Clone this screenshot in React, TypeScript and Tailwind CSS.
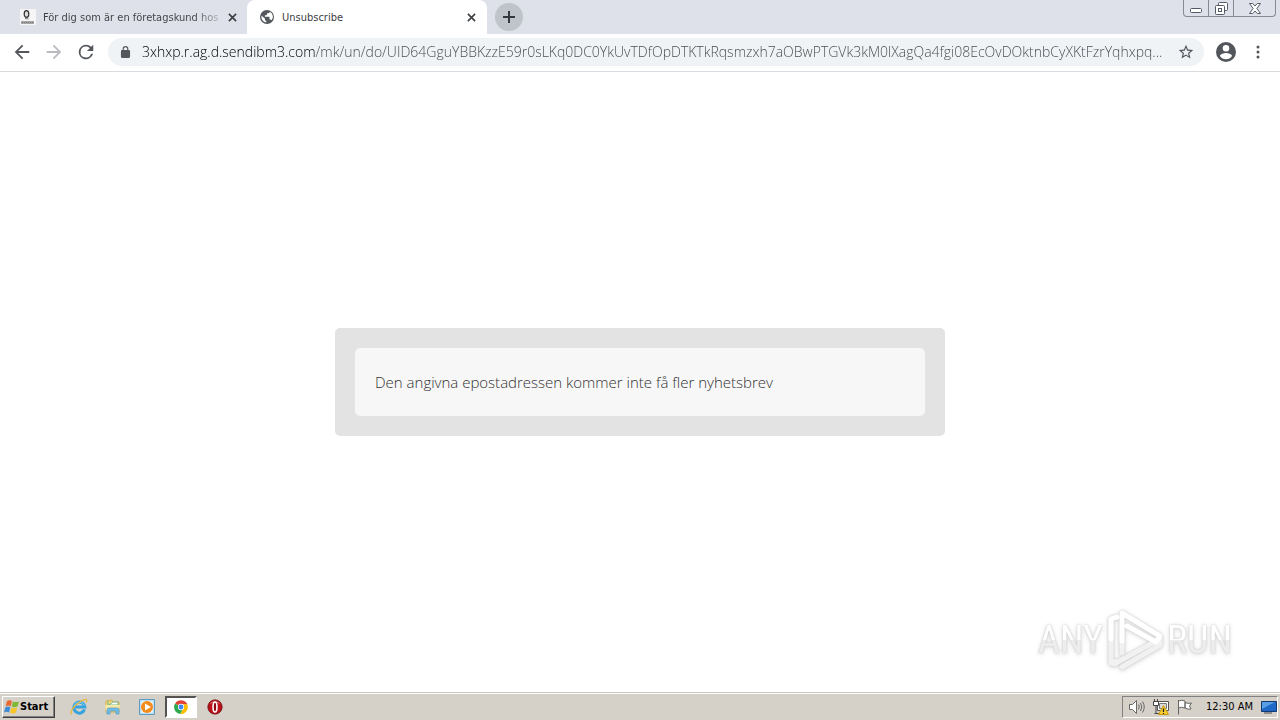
import React from "react";

const url =
  "3xhxp.r.ag.d.sendibm3.com/mk/un/do/UID64GguYBBKzzE59r0sLKq0DC0YkUvTDfOpDTKTkRqsmzxh7aOBwPTGVk3kM0lXagQa4fgi08EcOvDOktnbCyXKtFzrYqhxpq...";

function CloseIcon() {
  return (
    <svg viewBox="0 0 10 10" className="size-[9px]" stroke="#3c4043" strokeWidth="1.8">
      <path d="M1 1l8 8M9 1l-8 8" />
    </svg>
  );
}

function TabStrip() {
  return (
    <header className="flex h-[34px] items-start bg-[#dee1e9]">
      <div className="flex h-[34px] w-[247px] items-center pl-5 pr-[7px]">
        <svg viewBox="0 0 16 16" className="size-4 shrink-0">
          <path d="M0 0h16v16H0z" fill="#f5f5f5" />
          <ellipse cx="6.5" cy="5" rx="2.3" ry="3.4" fill="#ddd" stroke="#333" strokeWidth="1.2" />
          <path d="M5 9.500l3.500.500" stroke="#777" strokeWidth="1" />
          <path d="M1 12h13v3H1z" fill="#a5a5a5" />
          <path d="M2 13.500h11" stroke="#777" strokeDasharray="1 1" />
        </svg>
        <a
          href="#first"
          className="ml-[7px] whitespace-nowrap bg-[linear-gradient(to_right,#3c4043_150px,#b0b3b9_175px)] bg-clip-text pt-[2px] text-[11px] text-transparent"
        >
          För dig som är en företagskund hos
        </a>
        <button aria-label="Close first tab" className="ml-auto flex size-4 items-center justify-center">
          <CloseIcon />
        </button>
      </div>
      <div className="flex h-[34px] w-60 items-center rounded-t-lg bg-white pl-[13px] pr-2">
        <svg viewBox="2 2 20 20" className="size-[14px] shrink-0" fill="#54585d">
          <path
            fillRule="evenodd"
            d="M12 2a10 10 0 1 0 0 20 10 10 0 0 0 0-20zM4.200 10.200L9 14v1.500c0 1.100.9 2 2 2v2.400A8 8 0 0 1 4.200 10.200zM18.500 16.800c-.3-.8-1-1.300-1.900-1.300h-1v-3c0-.6-.4-1-1-1H9V9.500h2c.6 0 1-.4 1-1v-2h2c1.100 0 2-.9 2-2a8 8 0 0 1 2.500 12.300z"
          />
        </svg>
        <a href="#unsubscribe" className="ml-2 pt-[2px] text-[11px] text-[#3c4043]">
          Unsubscribe
        </a>
        <button aria-label="Close Unsubscribe tab" className="ml-auto flex size-4 items-center justify-center">
          <CloseIcon />
        </button>
      </div>
      <button aria-label="New tab" className="ml-2 mt-[3px] flex size-7 items-center justify-center rounded-full bg-[#bfc3ca]">
        <svg viewBox="0 0 12 12" className="size-3" stroke="#34373b" strokeWidth="2">
          <path d="M6 0v12M0 6h12" />
        </svg>
      </button>
      <div className="ml-auto mr-1 flex h-[17px] rounded-b-[4px] border border-t-0 border-[#858a96]">
        <button aria-label="Minimize" className="flex w-[25px] items-center justify-center border-r border-[#858a96]">
          <svg viewBox="0 0 12 12" className="size-3" fill="#fff" stroke="#555b66">
            <rect x=".5" y="6.500" width="11" height="4" rx="1" />
          </svg>
        </button>
        <button aria-label="Restore" className="flex w-[25px] items-center justify-center border-r border-[#858a96]">
          <svg viewBox="0 0 13 13" className="size-[13px]" fill="#fff" stroke="#555b66">
            <rect x="3.500" y=".5" width="9" height="8" rx="1" />
            <rect x=".5" y="3.500" width="9" height="9" rx="1" />
            <rect x="3.500" y="6.500" width="3" height="3" />
          </svg>
        </button>
        <button aria-label="Close window" className="flex w-[41px] items-center justify-center">
          <svg viewBox="0 0 12 11" className="h-[11px] w-3" fill="#fff" stroke="#555b66">
            <path d="M.5.5h3.200L6 3 8.300.5h3.200L7.900 5.500l3.600 5H8.300L6 8l-2.300 2.500H.5l3.600-5z" />
          </svg>
        </button>
      </div>
    </header>
  );
}

function Toolbar() {
  return (
    <nav className="flex h-[38px] items-center border-b border-[#d9dbde] bg-white pb-[2px] pl-3 pr-[14px]">
      <button aria-label="Back">
        <svg viewBox="1 1 22 22" className="size-5" fill="#53575c">
          <path d="M20 11H7.830l5.590-5.590L12 4l-8 8 8 8 1.410-1.410L7.830 13H20z" />
        </svg>
      </button>
      <button aria-label="Forward" className="ml-3">
        <svg viewBox="1 1 22 22" className="size-5" fill="#b9bbbe">
          <path d="M4 11h12.170l-5.590-5.590L12 4l8 8-8 8-1.410-1.410L16.170 13H4z" />
        </svg>
      </button>
      <button aria-label="Reload" className="ml-3">
        <svg viewBox="1 1 22 22" className="size-5" fill="#53575c">
          <path d="M17.650 6.350A7.950 7.950 0 0 0 12 4a8 8 0 1 0 7.730 10h-2.080A6 6 0 1 1 12 6c1.660 0 3.140.69 4.220 1.780L13 11h7V4z" />
        </svg>
      </button>
      <div className="ml-3 flex h-7 min-w-0 flex-1 items-center rounded-full bg-[#f0f3f5] pl-3 pr-[10px]">
        <svg viewBox="4 1 16 21" className="h-3 w-[11px] shrink-0" fill="#54585d">
          <path d="M18 8h-1V6A5 5 0 0 0 7 6v2H6a2 2 0 0 0-2 2v10c0 1.100.9 2 2 2h12a2 2 0 0 0 2-2V10a2 2 0 0 0-2-2zM9 6a3 3 0 0 1 6 0v2H9z" />
        </svg>
        <input
          aria-label="Address"
          readOnly
          value={url}
          className="ml-[11px] min-w-0 flex-1 bg-[linear-gradient(to_right,#000_173px,#44484c_173px)] bg-clip-text font-['Open_Sans','Noto_Sans',sans-serif] text-[14px] font-light text-transparent outline-none"
        />
        <button aria-label="Bookmark this page" className="ml-2">
          <svg viewBox="1 1 22 22" className="size-4" fill="#53575c">
            <path d="M22 9.240l-7.190-.62L12 2 9.190 8.630 2 9.240l5.460 4.730L5.820 21 12 17.270 18.180 21l-1.630-7.030zM12 15.400l-3.760 2.270 1-4.280-3.320-2.880 4.380-.38L12 6.100l1.710 4.040 4.380.38-3.320 2.880 1 4.280z" />
          </svg>
        </button>
      </div>
      <button aria-label="Profile" className="ml-3">
        <svg viewBox="2 2 20 20" className="size-5" fill="#53575c">
          <path d="M12 2a10 10 0 1 0 0 20 10 10 0 0 0 0-20zm0 3a3.300 3.300 0 1 1 0 6.600A3.300 3.300 0 0 1 12 5zm0 14.200a7.200 7.200 0 0 1-6-3.220c.03-2 4-3.080 6-3.080s5.970 1.090 6 3.080a7.200 7.200 0 0 1-6 3.220z" />
        </svg>
      </button>
      <button aria-label="Menu" className="ml-[14px] flex w-4 justify-center">
        <svg viewBox="0 0 4 14" className="h-[14px] w-1" fill="#53575c">
          <circle cx="2" cy="2" r="1.500" />
          <circle cx="2" cy="7" r="1.500" />
          <circle cx="2" cy="12" r="1.500" />
        </svg>
      </button>
    </nav>
  );
}

function Watermark() {
  return (
    <div className="absolute bottom-5 right-12 flex items-center font-['Roboto_Condensed','Liberation_Sans_Narrow','Roboto',sans-serif] text-[38px] leading-[64px] text-white [filter:drop-shadow(0_0_1px_#ccc)_drop-shadow(0_1px_2px_#ddd)]">
      <span className="bg-[linear-gradient(#fff_50%,#ededed_50%)] bg-clip-text text-transparent">ANY</span>
      <svg viewBox="0 0 64 64" className="h-16 w-16" fill="none" strokeWidth="5" strokeLinejoin="round" strokeLinecap="round">
        <path d="M14 9L8 11v44l5-2" stroke="#f1f1f1" />
        <path d="M14 9L8 11v20" stroke="#fff" />
        <path d="M19 59l38-22v-6L11 56" stroke="#f1f1f1" />
        <path d="M19 45V20" stroke="#f1f1f1" />
        <path d="M19 33V5l38 23-4 6-29-16" stroke="#fff" />
      </svg>
      <span className="bg-[linear-gradient(#fff_50%,#ededed_50%)] bg-clip-text text-transparent">RUN</span>
    </div>
  );
}

function TaskbarIcons() {
  return (
    <>
      <button aria-label="Internet Explorer" className="ml-[14px] flex w-5 justify-center">
        <svg viewBox="0 0 18 18" className="size-[18px]" fill="none">
          <path d="M14.500 11.500A5.500 5.500 0 1 1 14.800 9H5" stroke="#35a3df" strokeWidth="3" />
          <path d="M4 8.500C5 4 12 2 14.200 7.500" stroke="#8bd5f6" />
          <path d="M2 15.500C-1 17 2 9 9 4.500s9-3.500 7-.2" stroke="#e5b73c" strokeWidth="1.300" />
        </svg>
      </button>
      <button aria-label="File Explorer" className="ml-[14px] flex w-5 justify-center">
        <svg viewBox="0 0 18 18" className="size-[18px]">
          <path d="M2 3l6-1 1 2h6v10H2z" fill="#f1d779" stroke="#d6b34c" />
          <path d="M4 3v4M9 4h5v3H5z" fill="#fff" stroke="#75b88a" />
          <path d="M1 7h15l-1 6H2z" fill="#f8e8a4" />
          <path d="M3 16v-4q0-2 2-2h8q2 0 2 2v4h-3v-3H6v3z" fill="#72bce5" stroke="#4d9dcc" strokeWidth=".7" />
        </svg>
      </button>
      <button aria-label="Media Player" className="ml-[14px] flex w-5 justify-center">
        <svg viewBox="0 0 18 18" className="size-[18px]">
          <path d="M1.500 1.500h15v15h-15z" fill="#c0dff2" stroke="#5b9ac4" />
          <path d="M3.500 3.500h11v11h-11z" fill="#fff" />
          <circle cx="9" cy="9" r="6" fill="#f38b1d" />
          <path d="M7 5.500l6 3.500-6 3.500z" fill="#fff" />
        </svg>
      </button>
      <button
        aria-label="Chrome"
        className="ml-2 flex h-[22px] w-8 items-center justify-center border-2 border-b-white border-l-[#55534f] border-r-white border-t-[#55534f] bg-white"
      >
        <svg viewBox="0 0 16 16" className="size-[14px]">
          <path d="M8 8L1.300 4A8 8 0 0 1 15 4.200L15 5H8z" fill="#e34133" />
          <path d="M8 8L1.200 4A8 8 0 0 0 7.200 16l3.500-6z" fill="#2da94f" />
          <path d="M8 8l2.800 2L7.200 16A8 8 0 0 0 15.200 4.800H8z" fill="#fdbd00" />
          <circle cx="8" cy="8" r="3.600" fill="#fff" />
          <circle cx="8" cy="8" r="2.800" fill="#4285f4" />
        </svg>
      </button>
      <button aria-label="Opera" className="ml-2 flex w-5 justify-center">
        <svg viewBox="0 0 18 18" className="size-4">
          <circle cx="9" cy="9" r="8" fill="#bd1018" stroke="#6f070b" />
          <path d="M3 5.500C5.500 1.500 12.500 1.500 15 5.500 12 4 6 4 3 5.500z" fill="#e36a6a" />
          <ellipse cx="9" cy="9" rx="2.200" ry="5.600" fill="#8c0b10" stroke="#fff" strokeWidth="1.800" />
        </svg>
      </button>
    </>
  );
}

function Taskbar() {
  return (
    <footer className="flex h-7 shrink-0 items-center border-t border-[#c9c5bd] bg-[#d5d0c8] px-[2px] pt-[1px] shadow-[inset_0_1px_0_#fff]">
      <button className="flex h-[22px] w-[53px] items-center border border-b-[#404040] border-l-white border-r-[#404040] border-t-white pl-[1px] font-['DejaVu_Sans_Condensed','DejaVu_Sans',sans-serif] text-[11px] font-bold text-black shadow-[inset_-1px_-1px_0_#808080]">
        <svg viewBox="0 0 16 16" className="size-4 shrink-0">
          <path d="M3 2q2.500-1.500 5 0L6.700 7.200q-2.500-1.400-5 0z" fill="#e8682c" />
          <path d="M9 2.400q2.500 1.400 6 0L13.500 7.500q-3 1.500-5.800.1z" fill="#80ba35" />
          <path d="M1.400 8.200q2.500-1.400 5 0L5 13.400q-2.500-1.400-5 0z" fill="#3e8bd6" />
          <path d="M7.400 8.600q2.500 1.400 5.800 0L11.800 13.700q-3 1.400-5.800.1z" fill="#f7c429" />
        </svg>
        Start
      </button>
      <TaskbarIcons />
      <div className="ml-auto flex h-[22px] items-center border border-b-white border-l-[#808080] border-r-white border-t-[#808080] pl-[5px]">
        <svg viewBox="0 0 18 16" className="h-4 w-[18px]" fill="none" stroke="#686868">
          <path d="M1.500 5.500h3l4-4v13l-4-4h-3z" fill="#fff" />
          <path d="M10.500 5.500q1.500 2.500 0 5M12.500 4q2.500 4 0 8M14.500 2.500q3.500 5.500 0 11" />
        </svg>
        <svg viewBox="0 0 18 18" className="ml-[6px] size-[18px]">
          <path d="M5.500 3.500h11v9h-11z" fill="#fff" stroke="#555" />
          <path d="M7.500 5.500h7v5h-7z" fill="#d9d9d9" stroke="#777" />
          <path d="M1.500 3.500h5v4h-5zM2.500 1v2M5.500 1v2M4 7.500v8M2.500 15.500h5" fill="#fff" stroke="#444" />
          <path d="M11.500 7.500l5 9H6.500z" fill="#fbd02b" stroke="#c99b0a" />
          <path d="M11.500 10.500v3.500M11.500 15v1" stroke="#222" strokeWidth="1.300" />
        </svg>
        <svg viewBox="0 0 17 16" className="ml-[6px] h-4 w-[17px]" fill="#fff" stroke="#666">
          <path d="M2.500 1v14.500M2.500 2q3-1.500 6.500 0v7q-3.500-1.500-6.500 0zM9 3.500q3 1.500 6.500.5l-2 3 1.500 3q-3 .8-6-1z" />
        </svg>
        <time className="ml-[13px] whitespace-nowrap text-[11px] text-black">12:30 AM</time>
        <svg viewBox="0 0 16 14" className="ml-2 h-[14px] w-4">
          <path d="M.5 1.500h15v10H.5z" fill="#1e69c8" stroke="#12396f" />
          <path d="M1 2h13L1 9z" fill="#579ee5" />
          <path d="M3 13h8" stroke="#777" strokeWidth="1.500" />
        </svg>
      </div>
    </footer>
  );
}

export default function App() {
  return (
    <div className="flex min-h-screen flex-col bg-white font-['DejaVu_Sans_Condensed','Noto_Sans',sans-serif]">
      <TabStrip />
      <Toolbar />
      <main className="relative flex flex-1 items-center justify-center">
        <section className="w-full max-w-[610px] rounded-[5px] bg-[#e3e3e3] p-5">
          <p className="rounded-[5px] bg-[#f7f7f7] px-5 py-6 font-['Open_Sans',sans-serif] text-[15px] font-light leading-5 text-[#333]">
            Den angivna epostadressen kommer inte få fler nyhetsbrev
          </p>
        </section>
        <Watermark />
      </main>
      <Taskbar />
    </div>
  );
}
